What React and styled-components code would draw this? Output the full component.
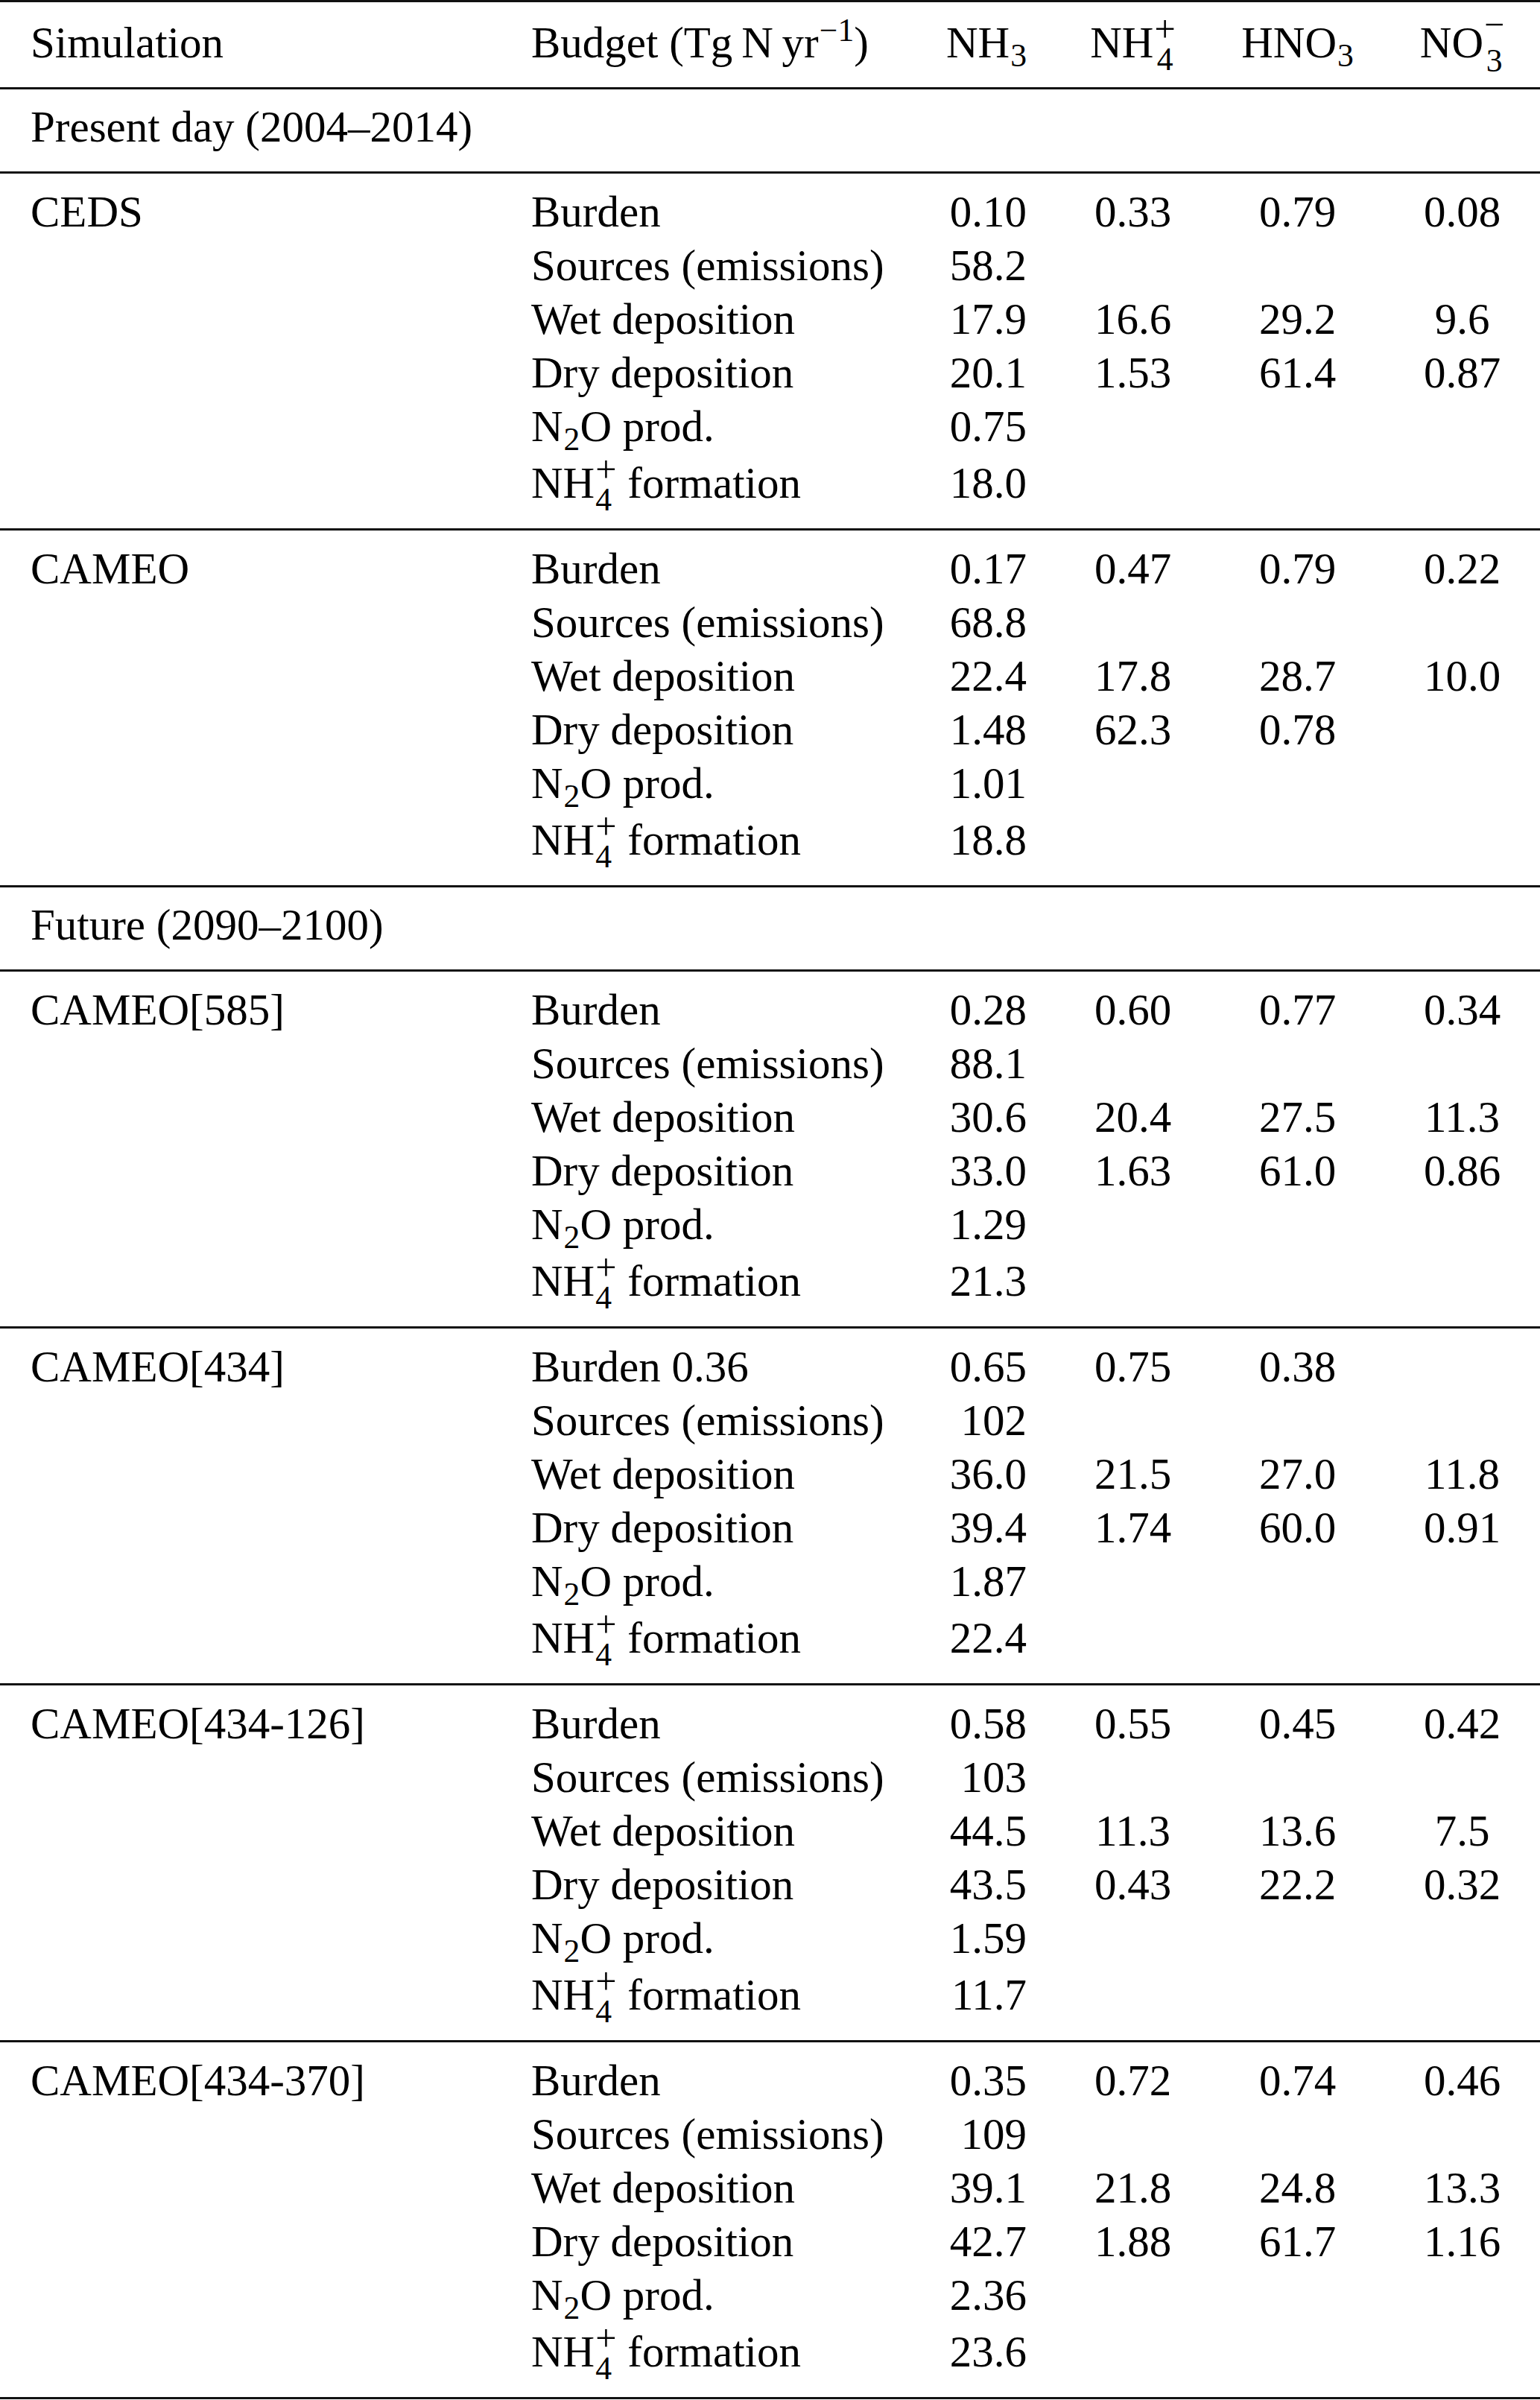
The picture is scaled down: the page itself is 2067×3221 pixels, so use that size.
import React from 'react'
import styled, { createGlobalStyle } from 'styled-components'

const GlobalStyle = createGlobalStyle`
  body {
    margin: 0;
    background: #fff;
    color: #000;
    font-family: "Liberation Serif", "Times New Roman", serif;
  }
`

// sub/superscript stack, moved by transform so the line box keeps its height
const Script = styled.span`
  display: inline-grid;
  font-size: 0.74em;
  line-height: 1;
  margin-left: 1px;
`

const Mark = styled.span`
  grid-area: 1 / 1;
  font-size: ${p => p.$size || 1}em;
  transform: translateY(${p => p.$shift}em);
`

const NH3 = () => (<>NH<Script><Mark $shift={0.27}>3</Mark></Script></>)
const NH4 = () => (<>NH<Script><Mark $size={1.15} $shift={-0.41}>+</Mark><Mark $shift={0.53}>4</Mark></Script></>)
const HNO3 = () => (<>HNO<Script><Mark $shift={0.27}>3</Mark></Script></>)
const NO3 = () => (<>NO<Script><Mark $size={1.1} $shift={-0.58}>−</Mark><Mark $shift={0.53}>3</Mark></Script></>)
const N2O = () => (<>N<Script><Mark $shift={0.27}>2</Mark></Script>O</>)

const Table = styled.div`
  width: 2067px;
  border-top: 3px solid #111;
  font-size: 59px;
  line-height: 72px;
`

const Grid = styled.div`
  display: grid;
  grid-template-columns: 672px 517px 180px 221px 221px 1fr;
  padding-left: 41px;
  padding-top: ${p => (p.$tall ? 4 : 0)}px;
`

const Header = styled(Grid)`
  padding-top: 18px;
  padding-bottom: 24px;
  border-bottom: 3px solid #111;
`

const Section = styled.div`
  padding: 14px 0 24px 41px;
  border-bottom: 3px solid #111;
`

const Group = styled.div`
  padding: 15px 0 25px;
  border-bottom: 3px solid #111;
`

const Cell = styled.div`
  white-space: nowrap;
`

const Num = styled.div`
  white-space: nowrap;
  text-align: ${p => (p.$col === 0 ? 'right' : 'center')};
  padding-right: ${p => (p.$col === 0 ? 32 : 0)}px;
  padding-left: ${p => (p.$col === 3 ? 6 : 0)}px;
`

const labels = [
  'Burden',
  'Sources (emissions)',
  'Wet deposition',
  'Dry deposition',
  <><N2O /> prod.</>,
  <><NH4 /> formation</>,
]

const groups = [
  {
    name: 'CEDS',
    rows: [
      ['0.10', '0.33', '0.79', '0.08'],
      ['58.2'],
      ['17.9', '16.6', '29.2', '9.6'],
      ['20.1', '1.53', '61.4', '0.87'],
      ['0.75'],
      ['18.0'],
    ],
  },
  {
    name: 'CAMEO',
    rows: [
      ['0.17', '0.47', '0.79', '0.22'],
      ['68.8'],
      ['22.4', '17.8', '28.7', '10.0'],
      ['1.48', '62.3', '0.78'],
      ['1.01'],
      ['18.8'],
    ],
  },
  {
    name: 'CAMEO[585]',
    rows: [
      ['0.28', '0.60', '0.77', '0.34'],
      ['88.1'],
      ['30.6', '20.4', '27.5', '11.3'],
      ['33.0', '1.63', '61.0', '0.86'],
      ['1.29'],
      ['21.3'],
    ],
  },
  {
    name: 'CAMEO[434]',
    first: 'Burden 0.36',
    rows: [
      ['0.65', '0.75', '0.38'],
      ['102'],
      ['36.0', '21.5', '27.0', '11.8'],
      ['39.4', '1.74', '60.0', '0.91'],
      ['1.87'],
      ['22.4'],
    ],
  },
  {
    name: 'CAMEO[434-126]',
    rows: [
      ['0.58', '0.55', '0.45', '0.42'],
      ['103'],
      ['44.5', '11.3', '13.6', '7.5'],
      ['43.5', '0.43', '22.2', '0.32'],
      ['1.59'],
      ['11.7'],
    ],
  },
  {
    name: 'CAMEO[434-370]',
    rows: [
      ['0.35', '0.72', '0.74', '0.46'],
      ['109'],
      ['39.1', '21.8', '24.8', '13.3'],
      ['42.7', '1.88', '61.7', '1.16'],
      ['2.36'],
      ['23.6'],
    ],
  },
]

function Block({ group }) {
  return (
    <Group>
      {group.rows.map((vals, i) => (
        <Grid key={i} $tall={i === 5}>
          <Cell>{i === 0 ? group.name : ''}</Cell>
          <Cell>{i === 0 && group.first ? group.first : labels[i]}</Cell>
          {[0, 1, 2, 3].map(c => (
            <Num key={c} $col={c}>{vals[c] || ''}</Num>
          ))}
        </Grid>
      ))}
    </Group>
  )
}

export default function App() {
  return (
    <>
      <GlobalStyle />
      <Table>
        <Header>
          <Cell>Simulation</Cell>
          <Cell>
            Budget (Tg{'\u2009'}N{'\u2009'}yr<Script><Mark $shift={-0.5}>−1</Mark></Script>)
          </Cell>
          <Num $col={0}><NH3 /></Num>
          <Num $col={1}><NH4 /></Num>
          <Num $col={2}><HNO3 /></Num>
          <Num $col={3}><NO3 /></Num>
        </Header>
        <Section>Present day (2004–2014)</Section>
        {groups.slice(0, 2).map(g => <Block key={g.name} group={g} />)}
        <Section>Future (2090–2100)</Section>
        {groups.slice(2).map(g => <Block key={g.name} group={g} />)}
      </Table>
    </>
  )
}
